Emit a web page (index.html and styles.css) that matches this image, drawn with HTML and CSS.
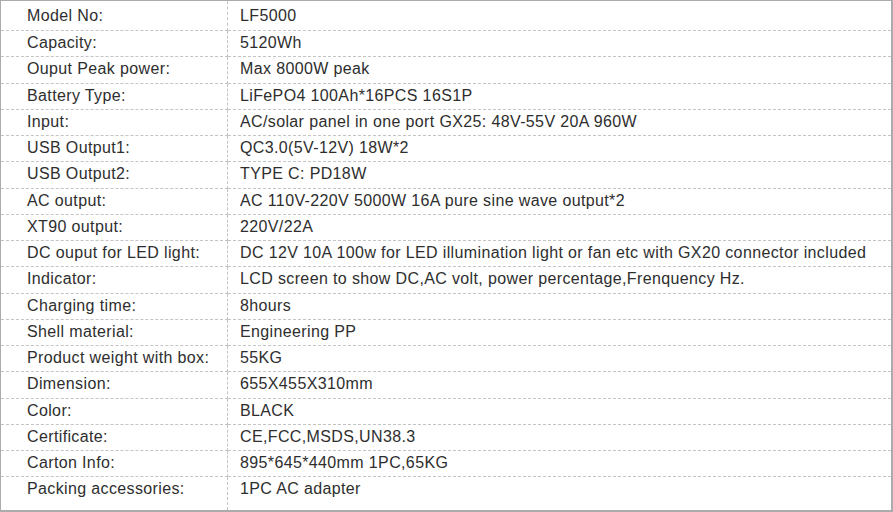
FILE: index.html
```html
<!DOCTYPE html>
<html>
<head>
<meta charset="utf-8">
<link rel="stylesheet" href="styles.css">
</head>
<body>
<div class="spec">
  <div class="k">Model No:</div><div class="v">LF5000</div>
  <div class="k">Capacity:</div><div class="v">5120Wh</div>
  <div class="k">Ouput Peak power:</div><div class="v">Max 8000W peak</div>
  <div class="k">Battery Type:</div><div class="v">LiFePO4 100Ah*16PCS 16S1P</div>
  <div class="k">Input:</div><div class="v">AC/solar panel in one port GX25: 48V-55V 20A 960W</div>
  <div class="k">USB Output1:</div><div class="v">QC3.0(5V-12V) 18W*2</div>
  <div class="k">USB Output2:</div><div class="v">TYPE C: PD18W</div>
  <div class="k">AC output:</div><div class="v">AC 110V-220V 5000W 16A pure sine wave output*2</div>
  <div class="k">XT90 output:</div><div class="v">220V/22A</div>
  <div class="k">DC ouput for LED light:</div><div class="v">DC 12V 10A 100w for LED illumination light or fan etc with GX20 connector included</div>
  <div class="k">Indicator:</div><div class="v">LCD screen to show DC,AC volt, power percentage,Frenquency Hz.</div>
  <div class="k">Charging time:</div><div class="v">8hours</div>
  <div class="k">Shell material:</div><div class="v">Engineering PP</div>
  <div class="k">Product weight with box:</div><div class="v">55KG</div>
  <div class="k">Dimension:</div><div class="v">655X455X310mm</div>
  <div class="k">Color:</div><div class="v">BLACK</div>
  <div class="k">Certificate:</div><div class="v">CE,FCC,MSDS,UN38.3</div>
  <div class="k">Carton Info:</div><div class="v">895*645*440mm 1PC,65KG</div>
  <div class="k last">Packing accessories:</div><div class="v last">1PC AC adapter</div>
</div>
</body>
</html>
```

FILE: styles.css
```css
html, body {
  margin: 0;
  padding: 0;
  background: #ffffff;
}

.spec {
  box-sizing: border-box;
  width: 893px;
  height: 512px;
  border: 1px solid #ababab;
  border-right-width: 2px;
  border-bottom-width: 2px;
  display: grid;
  grid-template-columns: 227px 1fr;
  grid-template-rows: 30px repeat(17, 26.25px) 1fr;
  font-family: "Liberation Sans", Arial, sans-serif;
  font-size: 16px;
  letter-spacing: 0.37px;
  line-height: 18px;
  color: #2e2e2e;
}

.k, .v {
  box-sizing: border-box;
  border-bottom: 1px dashed #c4c4c4;
  padding-top: 3px;
  white-space: nowrap;
}

.k {
  padding-left: 26px;
  border-right: 1px dashed #c4c4c4;
}

.v {
  padding-left: 12px;
}

.k:first-child, .k:first-child + .v {
  padding-top: 6px;
}

.last {
  border-bottom: none;
}
```
